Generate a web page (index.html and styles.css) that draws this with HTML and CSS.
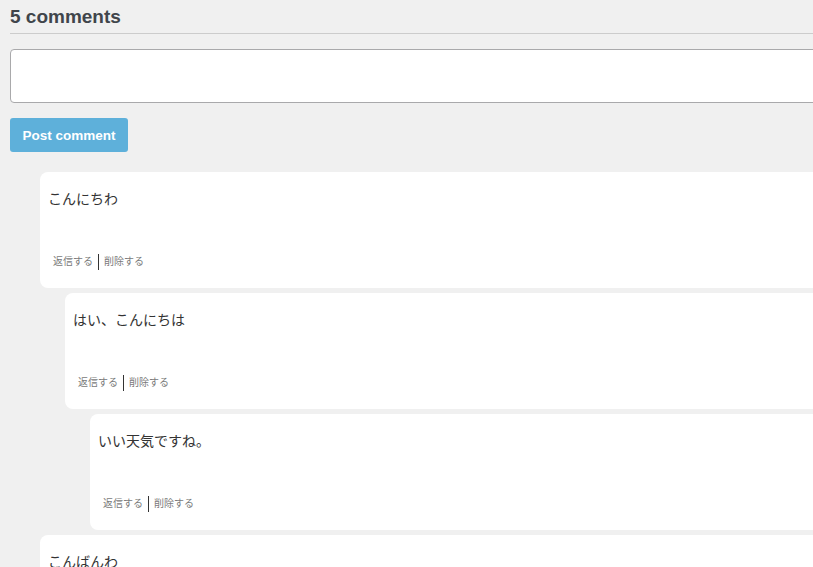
FILE: index.html
```html
<!DOCTYPE html>
<html lang="ja">
<head>
<meta charset="utf-8">
<link rel="stylesheet" href="styles.css">
</head>
<body>
<div class="wrap">
  <h2 class="title">5 comments</h2>
  <div class="form">
    <textarea class="input"></textarea>
    <button class="btn">Post comment</button>
  </div>
  <div class="list">
    <div class="card lv1">
      <p class="text">こんにちわ</p>
      <div class="actions"><span>返信する</span><span class="sep"></span><span>削除する</span></div>
    </div>
    <div class="card lv2">
      <p class="text">はい、こんにちは</p>
      <div class="actions"><span>返信する</span><span class="sep"></span><span>削除する</span></div>
    </div>
    <div class="card lv3">
      <p class="text">いい天気ですね。</p>
      <div class="actions"><span>返信する</span><span class="sep"></span><span>削除する</span></div>
    </div>
    <div class="card lv1">
      <p class="text">こんばんわ</p>
      <div class="actions"><span>返信する</span><span class="sep"></span><span>削除する</span></div>
    </div>
  </div>
</div>
</body>
</html>
```
FILE: styles.css
```css
html, body {
  margin: 0;
  padding: 0;
  background: #f0f0f0;
  overflow: hidden;
}
body {
  font-family: "Liberation Sans", "Noto Sans CJK JP", sans-serif;
  color: #333;
}
.wrap {
  width: 1000px;
  margin-left: 10px;
}
.title {
  margin: 0;
  padding-top: 6px;
  font-size: 19px;
  line-height: 22px;
  font-weight: bold;
  color: #40454b;
  padding-bottom: 5px;
  border-bottom: 1px solid #cccccc;
}
.form {
  padding-top: 15px;
}
.input {
  display: block;
  box-sizing: border-box;
  width: 100%;
  height: 54px;
  margin: 0;
  border: 1px solid #a9a9ab;
  border-radius: 4px;
  background: #fff;
  resize: none;
}
.btn {
  display: block;
  margin-top: 15px;
  width: 118px;
  height: 34px;
  padding: 0;
  border: none;
  border-radius: 3px;
  background: #5eb0da;
  color: #fff;
  font-family: "Liberation Sans", sans-serif;
  font-weight: bold;
  font-size: 13.5px;
}
.list {
  padding-top: 20px;
  display: flex;
  flex-direction: column;
  gap: 5px;
}
.card {
  background: #fff;
  border-radius: 8px;
  height: 116px;
  box-sizing: border-box;
  padding: 17px 8px 0;
}
.lv1 { margin-left: 30px; }
.lv2 { margin-left: 55px; }
.lv3 { margin-left: 80px; }
.text {
  margin: 0;
  font-size: 14px;
  line-height: 20px;
  color: #333;
}
.actions {
  margin-top: 45px;
  padding-left: 5px;
  display: flex;
  align-items: center;
  font-size: 10px;
  line-height: 16px;
  color: #7a7a7a;
}
.sep {
  display: inline-block;
  width: 1px;
  height: 16px;
  background: #333;
  margin: 0 5px 0 5px;
}
```
